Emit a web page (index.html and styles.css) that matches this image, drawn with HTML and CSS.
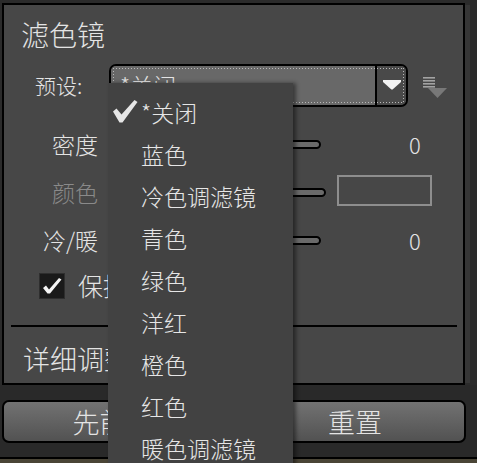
FILE: index.html
```html
<!DOCTYPE html>
<html lang="zh">
<head>
<meta charset="utf-8">
<title>滤色镜</title>
<link rel="stylesheet" href="styles.css">
</head>
<body>
<div class="app">
  <div class="top">
    <section class="panel">
      <div class="title">滤色镜</div>
      <div class="row preset">
        <span class="plabel">预设:</span>
        <div class="select">
          <div class="field">*关闭</div>
          <div class="arrowbtn">
            <svg width="18" height="10" viewBox="0 0 18 10"><polygon points="0,0 18,0 18,2 9.6,9.5 8.4,9.5 0,2" fill="#f2f2f2"/></svg>
          </div>
        </div>
        <svg class="presets-icon" width="24" height="23" viewBox="0 0 24 23">
          <rect x="0" y="1" width="12" height="1.6" fill="#a3a3a3"/>
          <rect x="0" y="4" width="12" height="1.6" fill="#a3a3a3"/>
          <rect x="0" y="7" width="12" height="1.6" fill="#a3a3a3"/>
          <rect x="0" y="10" width="12" height="1.6" fill="#a3a3a3"/>
          <polygon points="5,12 24,12 14.5,22" fill="#787878"/>
        </svg>
      </div>
      <div class="row srow first">
        <span class="label">密度</span>
        <div class="track w211"></div>
        <span class="val">0</span>
      </div>
      <div class="row srow">
        <span class="label disabled">颜色</span>
        <div class="track w216"></div>
        <div class="swatch"></div>
      </div>
      <div class="row srow">
        <span class="label">冷/暖</span>
        <div class="track w211"></div>
        <span class="val">0</span>
      </div>
      <div class="row crow">
        <span class="checkbox">
          <svg width="20" height="18" viewBox="0 0 20 18"><polygon points="1,11 4,8.5 7,12.5 17,1 19.5,2.5 8,16.5 5.5,16.5" fill="#f4f4f4"/></svg>
        </span>
        <span class="clabel">保持亮度</span>
      </div>
      <div class="sep"></div>
      <div class="detail">详细调整</div>
    </section>
    <div class="strip"></div>
  </div>
  <div class="bottom">
    <button class="btn btn-left">先前值</button>
    <button class="btn btn-right">重置</button>
  </div>
  <div class="footer"></div>

  <ul class="menu">
    <li class="item checked">
      <svg class="tick" width="25" height="23" viewBox="0 0 25 23"><polygon points="0,11.5 3.5,8.5 8.5,14.5 21.5,0 24.5,2 9.5,22.5 6.5,22.5" fill="#e6e6e6"/></svg>
      *关闭
    </li>
    <li class="item">蓝色</li>
    <li class="item">冷色调滤镜</li>
    <li class="item">青色</li>
    <li class="item">绿色</li>
    <li class="item">洋红</li>
    <li class="item">橙色</li>
    <li class="item">红色</li>
    <li class="item">暖色调滤镜</li>
  </ul>
</div>
</body>
</html>
```

FILE: styles.css
```css
* { box-sizing: border-box; }

html, body {
  margin: 0;
  padding: 0;
  background: #2b2b2b;
}

body {
  font-family: "Noto Sans CJK SC", "Microsoft YaHei", sans-serif;
  font-weight: 300;
  color: #e4e4e4;
}

.app {
  position: relative;
  width: 477px;
  height: 463px;
  overflow: hidden;
  background: #2b2b2b;
}

.top {
  display: flex;
  height: 385px;
}

.panel {
  margin: 3px 0 0 2px;
  width: 463px;
  height: 382px;
  border: 2px solid #000;
  background: #474747;
  overflow: hidden;
}

.strip {
  margin-top: 5px;
  width: 5px;
  height: 378px;
  background: #363636;
}

.title {
  height: 59px;
  line-height: 59px;
  font-size: 28px;
  padding-left: 17px;
}

.row {
  display: flex;
  align-items: center;
}

.preset {
  height: 43px;
}

.plabel {
  margin-left: 31px;
  width: 74px;
  font-size: 21px;
  line-height: 43px;
}

.select {
  position: relative;
  display: flex;
  width: 299px;
  height: 43px;
  border: 2px solid #000;
  border-radius: 7px;
  overflow: hidden;
}

.select::after {
  content: "";
  position: absolute;
  left: 2px;
  top: 2px;
  right: 2px;
  bottom: 2px;
  background:
    repeating-linear-gradient(to right, #b8b8b8 0 1px, transparent 1px 3px) left top / 100% 1px no-repeat,
    repeating-linear-gradient(to right, #b8b8b8 0 1px, transparent 1px 3px) left bottom / 100% 1px no-repeat,
    repeating-linear-gradient(to bottom, #b8b8b8 0 1px, transparent 1px 3px) left top / 1px 100% no-repeat,
    repeating-linear-gradient(to bottom, #b8b8b8 0 1px, transparent 1px 3px) right top / 1px 100% no-repeat;
}

.field {
  flex: 1;
  background: #686868;
  font-size: 23px;
  line-height: 39px;
  padding-left: 9px;
}

.arrowbtn {
  width: 31px;
  border-left: 2px solid #000;
  background: #494949;
  display: flex;
  align-items: center;
  justify-content: center;
  padding-bottom: 2px;
}

.presets-icon {
  margin-left: 15px;
  margin-top: 3px;
}

.srow {
  height: 48px;
}

.srow.first {
  margin-top: 13px;
}

.label {
  width: 94px;
  text-align: right;
  font-size: 23px;
  line-height: 48px;
}

.label.disabled {
  color: #8a8a8a;
}

.track {
  margin-left: 12px;
  height: 9px;
  border: 2px solid #000;
  border-radius: 5px;
  background: #6a6a6a;
}

.track.w211 { width: 211px; }
.track.w216 { width: 216px; margin-top: 1px; }

.val {
  margin-left: 88px;
  font-size: 22px;
  line-height: 48px;
}

.swatch {
  margin-left: 11px;
  width: 95px;
  height: 31px;
  border: 2px solid #8e8e8e;
  margin-top: -3px;
}

.crow {
  height: 43px;
}

.checkbox {
  margin-left: 35px;
  width: 26px;
  height: 26px;
  background: #1a1a1a;
  border: 1px solid #2e2e2e;
  display: flex;
  align-items: center;
  justify-content: center;
}

.clabel {
  margin-left: 13px;
  font-size: 25px;
  line-height: 43px;
}

.sep {
  margin: 18px 0 0 7px;
  width: 446px;
  height: 2px;
  background: #000;
}

.detail {
  height: 56px;
  padding-top: 7px;
  line-height: 49px;
  font-size: 27px;
  padding-left: 19px;
}

.bottom {
  height: 72px;
  display: flex;
  align-items: center;
  gap: 20px;
  padding-left: 2px;
  background: #292929;
}

.btn {
  width: 222px;
  height: 43px;
  border: 2px solid #000;
  border-radius: 7px;
  background: linear-gradient(to bottom, #727272, #525252);
  color: #e4e4e4;
  font-family: "Noto Sans CJK SC", "Microsoft YaHei", sans-serif;
  font-weight: 300;
  font-size: 27px;
  line-height: 39px;
  padding: 0;
  text-align: center;
}

.footer {
  height: 6px;
  border-top: 2px solid #000;
  background: #4a4536;
}

.menu {
  position: absolute;
  left: 108px;
  top: 83px;
  width: 185px;
  height: 400px;
  margin: 0;
  padding: 8px 0 0 0;
  list-style: none;
  background: #424242;
  box-shadow: 3px 0 4px rgba(0, 0, 0, 0.45);
}

.item {
  position: relative;
  height: 42px;
  line-height: 42px;
  padding-left: 33px;
  font-size: 23px;
  color: #e6e6e6;
}

.tick {
  position: absolute;
  left: 5px;
  top: 9px;
}
```
